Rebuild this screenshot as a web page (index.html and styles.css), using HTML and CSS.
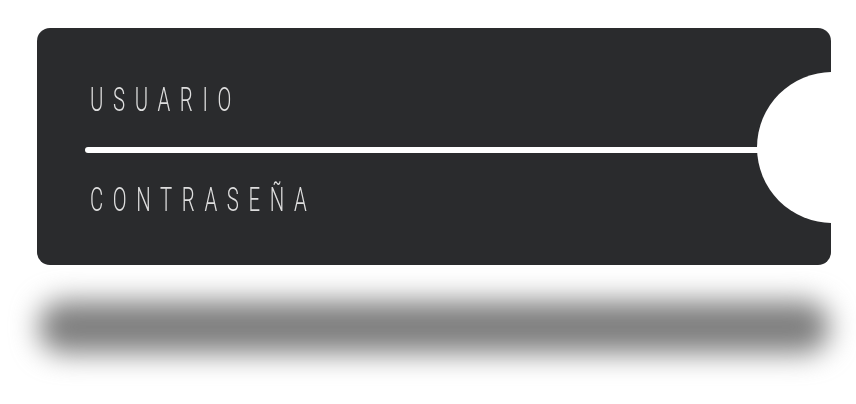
FILE: index.html
```html
<!DOCTYPE html>
<html lang="es">
<head>
<meta charset="utf-8">
<title>Login</title>
<link rel="stylesheet" href="styles.css">
</head>
<body>
<div class="stage">
  <form class="card">
    <div class="field field-user"><span class="label">USUARIO</span></div>
    <div class="divider"></div>
    <div class="field field-pass"><span class="label">CONTRASEÑA</span></div>
    <div class="knob"></div>
  </form>
  <div class="shadow"></div>
</div>
</body>
</html>
```
FILE: styles.css
```css
html, body {
  margin: 0;
  padding: 0;
  background: #ffffff;
  overflow: hidden;
}
.stage {
  width: 856px;
  height: 404px;
  padding: 28px 25px 0 37px;
  box-sizing: border-box;
  display: flex;
  flex-direction: column;
}
.card {
  position: relative;
  margin: 0;
  width: 794px;
  height: 237px;
  background: #2a2b2d;
  border-radius: 13px;
  overflow: hidden;
  padding: 55px 0 0 48px;
  box-sizing: border-box;
  display: flex;
  flex-direction: column;
}
.field {
  height: 32px;
  padding-left: 5px;
  display: flex;
  align-items: flex-start;
}
.label {
  display: inline-block;
  font-family: Roboto, "Liberation Sans", sans-serif;
  font-weight: 300;
  font-size: 34px;
  line-height: 32px;
  letter-spacing: 16px;
  color: #dedede;
  transform: scaleX(0.6);
  transform-origin: 0 0;
  white-space: nowrap;
}
.divider {
  margin-top: 32px;
  height: 6px;
  background: #ffffff;
  border-radius: 3px 0 0 3px;
}
.field-pass {
  margin-top: 30px;
}
.knob {
  position: absolute;
  left: 720px;
  top: 44px;
  width: 151px;
  height: 151px;
  border-radius: 50%;
  background: #ffffff;
}
.shadow {
  margin: 36px 0 0 2px;
  width: 790px;
  height: 52px;
  background: #7e7e7e;
  border-radius: 24px;
  filter: blur(14px);
}
```
